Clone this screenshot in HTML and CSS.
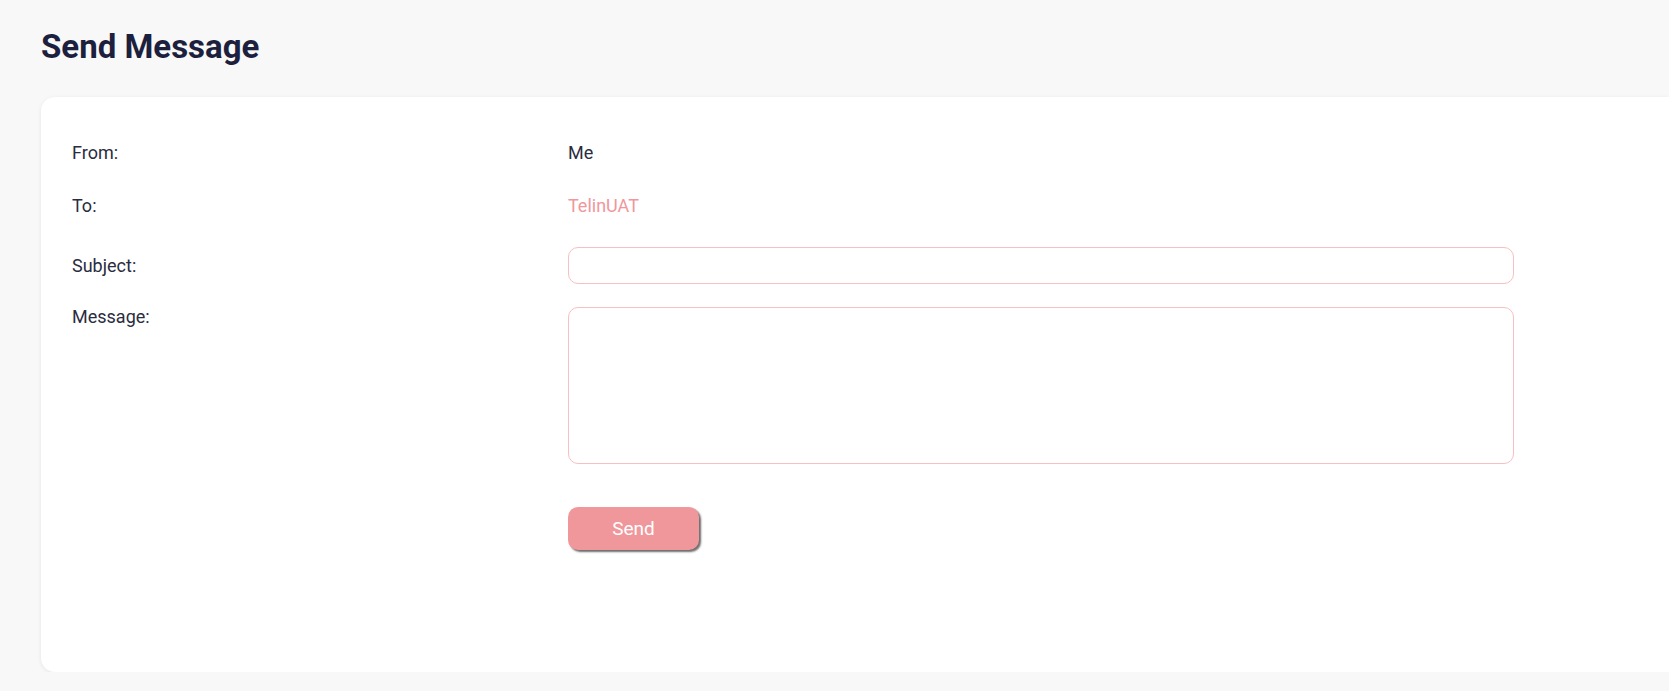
FILE: index.html
```html
<!DOCTYPE html>
<html>
<head>
<meta charset="utf-8">
<link rel="stylesheet" href="styles.css">
</head>
<body>
<div class="page">
  <h1 class="title">Send Message</h1>
  <div class="card">
    <div class="row row-from">
      <div class="label">From:</div>
      <div class="value">Me</div>
    </div>
    <div class="row row-to">
      <div class="label">To:</div>
      <div class="value value-link">TelinUAT</div>
    </div>
    <div class="row row-subject">
      <div class="label">Subject:</div>
      <input class="field" type="text">
    </div>
    <div class="row row-message">
      <div class="label label-top">Message:</div>
      <textarea class="field field-area"></textarea>
    </div>
    <div class="row row-send">
      <div class="label"></div>
      <button class="btn-send">Send</button>
    </div>
  </div>
</div>
</body>
</html>
```
FILE: styles.css
```css
html, body {
  margin: 0;
  padding: 0;
  background: #f8f8f8;
  overflow: hidden;
}
body {
  font-family: Roboto, "Liberation Sans", sans-serif;
  color: #2a2c40;
}
.page {
  padding: 24px 0 0 41px;
}
.title {
  margin: 0;
  font-size: 33px;
  line-height: 46px;
  font-weight: 700;
  color: #1c1f3d;
  letter-spacing: 0;
}
.card {
  margin-top: 27px;
  height: 575px;
  box-sizing: border-box;
  background: #ffffff;
  border-radius: 14px 0 0 14px;
  box-shadow: 0 1px 4px rgba(0, 0, 0, 0.08);
  padding: 43px 0 0 31px;
}
.row {
  display: flex;
  align-items: center;
}
.label {
  width: 496px;
  flex: none;
  font-size: 18px;
  line-height: 26px;
  color: #2a2c40;
}
.value {
  font-size: 18px;
  line-height: 26px;
  color: #2a2c40;
}
.value-link {
  color: #f0979b;
}
.row-to { margin-top: 27px; }
.row-subject { margin-top: 28px; }
.row-message { margin-top: 23px; align-items: flex-start; }
.row-send { margin-top: 43px; }
.label-top { margin-top: -3px; }
.field {
  width: 946px;
  height: 37px;
  box-sizing: border-box;
  border: 1px solid #f8c0c2;
  border-radius: 10px;
  background: #fff;
  outline: none;
  padding: 0 12px;
  font-family: inherit;
  font-size: 16px;
  margin: 0;
}
.field-area {
  height: 157px;
  resize: none;
  display: block;
}
.btn-send {
  width: 131px;
  height: 43px;
  border: none;
  border-radius: 10px;
  background: #f0979b;
  color: #ffffff;
  font-family: inherit;
  font-size: 19px;
  box-shadow: 2px 2px 2px rgba(60, 60, 60, 0.75);
  padding: 0;
  cursor: pointer;
}
```
